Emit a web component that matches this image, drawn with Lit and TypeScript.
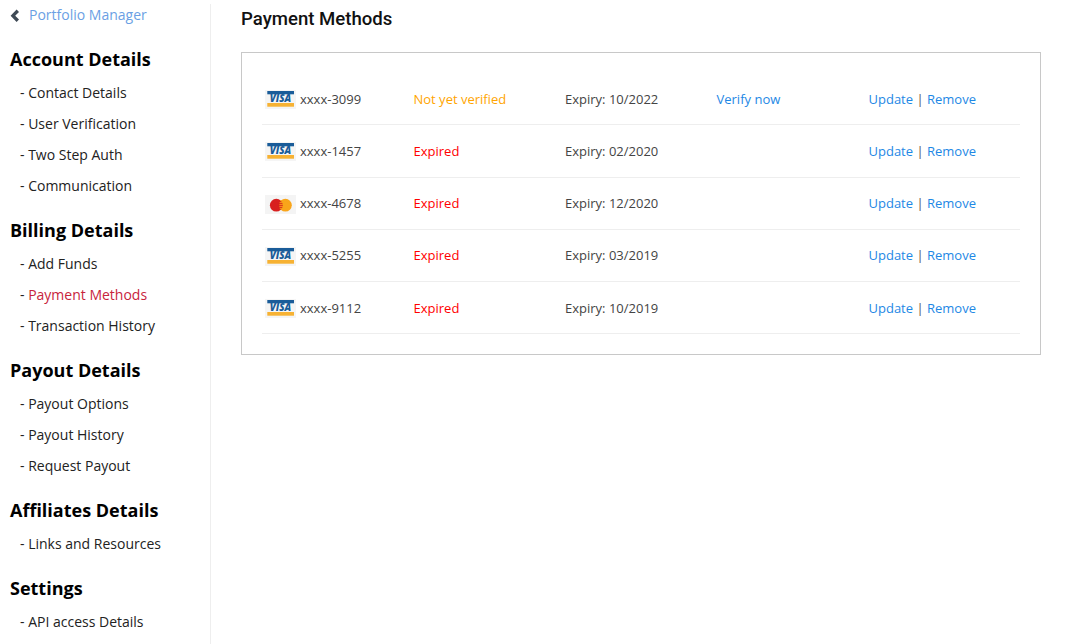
import { LitElement, html, css } from "lit";
import { customElement } from "lit/decorators.js";

const groups: [string, string[]][] = [
  ["Account Details", ["Contact Details", "User Verification", "Two Step Auth", "Communication"]],
  ["Billing Details", ["Add Funds", "Payment Methods", "Transaction History"]],
  ["Payout Details", ["Payout Options", "Payout History", "Request Payout"]],
  ["Affiliates Details", ["Links and Resources"]],
  ["Settings", ["API access Details"]],
];

type Row = { brand: "visa" | "mc"; num: string; status: string; warn?: boolean; exp: string; verify?: boolean };
const rows: Row[] = [
  { brand: "visa", num: "xxxx-3099", status: "Not yet verified", warn: true, exp: "10/2022", verify: true },
  { brand: "visa", num: "xxxx-1457", status: "Expired", exp: "02/2020" },
  { brand: "mc", num: "xxxx-4678", status: "Expired", exp: "12/2020" },
  { brand: "visa", num: "xxxx-5255", status: "Expired", exp: "03/2019" },
  { brand: "visa", num: "xxxx-9112", status: "Expired", exp: "10/2019" },
];

const visa = html`<svg class="card" width="31" height="19" viewBox="0 0 31 19">
  <rect width="31" height="19" fill="#f5f5f5"/>
  <rect x="2.3" y="1" width="26.7" height="3.3" fill="#1a5c99"/>
  <rect x="2.3" y="13" width="26.7" height="3.7" fill="#f7b233"/>
  <text x="15.5" y="12.2" text-anchor="middle" class="visa">VISA</text>
</svg>`;
const mc = html`<svg class="card" width="31" height="19" viewBox="0 0 31 19">
  <rect width="31" height="19" fill="#f4f4f4"/>
  <circle cx="20.4" cy="10.2" r="6.4" fill="#f9a51a"/>
  <circle cx="11.3" cy="10.2" r="6.4" fill="#d8201f"/>
  <path d="M15 5.7h2.5M14.6 7.7h3M14.4 9.7h3.4M14.4 11.7h3.4M14.8 13.7h3" stroke="#f9a51a" stroke-width="1" fill="none"/>
</svg>`;

@customElement("app-root")
export class AppRoot extends LitElement {
  static styles = css`
    :host { display: block; width: 1066px; height: 644px; overflow: hidden; background: #fff;
      font-family: "Open Sans", sans-serif; color: #222; }
    .page { display: flex; height: 644px; }
    .side { width: 211px; box-sizing: border-box; margin-top: 4px; border-right: 1px solid #eee; padding-left: 10px; flex: none; }
    .back { display: flex; align-items: center; height: 22px; margin-top: -1px; font-size: 14px; color: #6b9fe4; }
    .back svg { margin-right: 9px; flex: none; }
    .chev { fill: #3f4a55; }
    h3 { margin: 0; font-size: 18px; line-height: 25px; font-weight: 700; color: #000; }
    .head1 { margin-top: 22px; }
    .head { margin-top: 17px; }
    ul { list-style: none; margin: 5px 0 0; padding: 0 0 0 10px; }
    li { font-size: 14px; line-height: 31px; height: 31px; color: #222; white-space: nowrap; }
    li.on span { color: #c8243c; }
    .main { flex: 1; padding: 0 25px 0 30px; min-width: 0; }
    h2 { margin: 7px 0 0; font: 500 18.6px/24px Roboto, sans-serif; color: #111; }
    .box { margin-top: 21px; border: 1px solid #c8c8c8; box-sizing: border-box; width: 800px; height: 303px; padding: 20px 20px 0; }
    .row { display: grid; grid-template-columns: 151.5px 151.5px 151.5px 152px 1fr; align-items: center; height: 52.25px;
      box-sizing: border-box; border-bottom: 1px solid #eee; font-size: 13px; color: #444; white-space: nowrap; }
    .num { display: flex; align-items: center; padding-left: 3px; }
    .card { margin: 2px 4px 0 0; flex: none; }
    .visa { font: italic 800 9.8px "Open Sans", sans-serif; fill: #1a5c99; }
    .warn { color: #ffa500; }
    .bad { color: #f00; }
    .link { color: #1e88e5; }
    .sep { color: #555; }
  `;

  render() {
    return html`<div class="page">
      <nav class="side">
        <div class="back">
          <svg width="10" height="16" viewBox="0 0 10 16"><polygon class="chev" points="6.6,3.5 9,5.9 5.2,9.75 9,13.6 6.6,16 0.6,9.75"/></svg>
          Portfolio Manager
        </div>
        ${groups.map((g, i) => html`<div class="group">
          <h3 class="${i === 0 ? "head1" : "head"}">${g[0]}</h3>
          <ul>${g[1].map((t) => html`<li class="${t === "Payment Methods" ? "on" : ""}">- <span>${t}</span></li>`)}</ul>
        </div>`)}
      </nav>
      <main class="main">
        <h2>Payment Methods</h2>
        <div class="box">
          ${rows.map((r) => html`<div class="row">
            <div class="num">${r.brand === "visa" ? visa : mc}${r.num}</div>
            <div class="${r.warn ? "warn" : "bad"}">${r.status}</div>
            <div>Expiry: ${r.exp}</div>
            <div class="link">${r.verify ? "Verify now" : ""}</div>
            <div><span class="link">Update</span> <span class="sep">|</span> <span class="link">Remove</span></div>
          </div>`)}
        </div>
      </main>
    </div>`;
  }
}
